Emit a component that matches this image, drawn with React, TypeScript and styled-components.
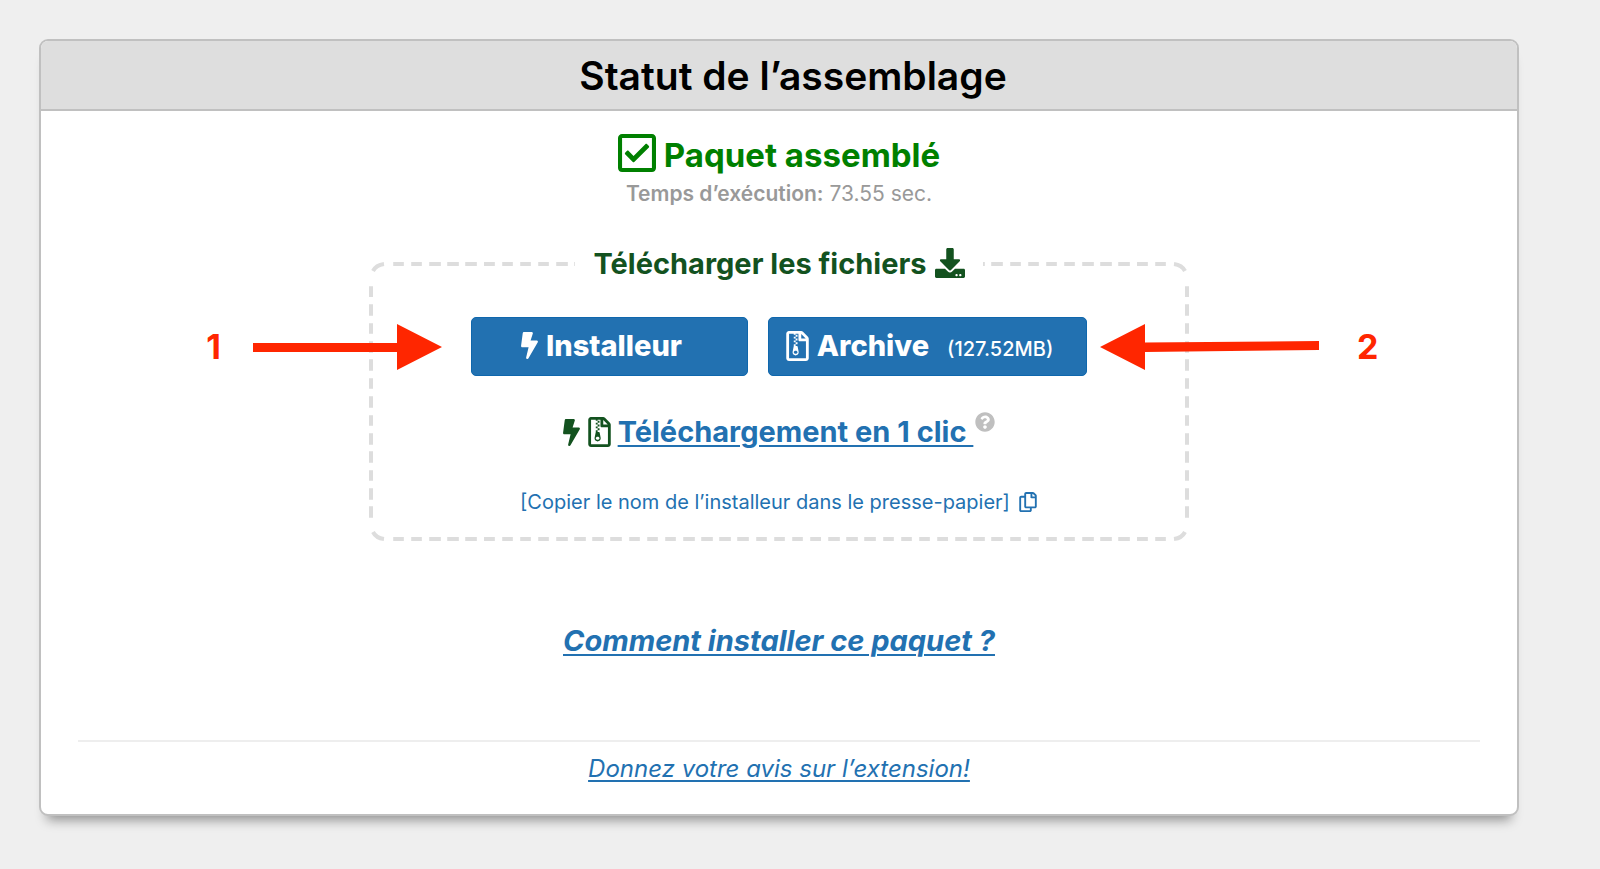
import React from "react";
import styled, { createGlobalStyle } from "styled-components";
import {
  FaBolt,
  FaDownload,
  FaQuestionCircle,
  FaRegCheckSquare,
  FaRegCopy,
  FaRegFileArchive,
} from "react-icons/fa";

const GlobalStyle = createGlobalStyle`
  * {
    box-sizing: border-box;
  }
  body {
    margin: 0;
    background: #efefef;
    color: #000;
    font-family: Inter, "Liberation Sans", sans-serif;
  }
`;

const Page = styled.main`
  padding: 39px 81px 52px 39px;
`;

const Card = styled.section`
  border: 2px solid #c0c0c0;
  border-radius: 9px;
  background: #fff;
  box-shadow: 0 12px 12px -8px rgba(0, 0, 0, 0.4);
`;

const CardHeader = styled.header`
  padding: 11px 0 9px 28px;
  border-bottom: 2px solid #c0c0c0;
  border-radius: 7px 7px 0 0;
  background: #dedede;
  text-align: center;
`;

const Title = styled.h1`
  margin: 0;
  font-size: 39px;
  font-weight: 600;
  line-height: 48px;
`;

const CardBody = styled.div`
  display: flex;
  flex-direction: column;
  align-items: center;
  padding: 20px 37px 30px;
`;

const Status = styled.h2`
  display: flex;
  align-items: center;
  gap: 8px;
  margin: 0;
  color: #008000;
  font-size: 33px;
  font-weight: 700;
  line-height: 48px;

  svg {
    width: 38px;
    height: 44px;
    margin-bottom: 4px;
  }
`;

const RunTime = styled.p`
  margin: 0 0 35px;
  color: #999;
  font-size: 21px;
  line-height: 30px;

  b {
    font-weight: 600;
  }
`;

/* Tile for the dashed frame: 20px rounded corners around an 18px dash period. */
const dashTile = `url("data:image/svg+xml,${encodeURIComponent(
  '<svg xmlns="http://www.w3.org/2000/svg" width="58" height="58" fill="none" stroke="#ddd" stroke-width="4">' +
    '<path d="M24 2h11M24 56h11M2 24v11M56 24v11"/>' +
    '<path d="M4 9Q7 3 15 2M54 9Q51 3 43 2M4 49Q7 55 15 56M54 49Q51 55 43 56"/>' +
    "</svg>",
)}")`;

const Downloads = styled.fieldset`
  display: flex;
  flex-direction: column;
  align-items: center;
  width: 820px;
  max-width: 100%;
  margin: 0;
  padding: 33px 20px 20px;
  border: 4px dashed #ddd;
  border-image: ${dashTile} 20 / 20px round;
`;

const Legend = styled.legend`
  margin: 0 auto;
  padding: 0 18px;
  color: #13521f;
  font-size: 29px;
  font-weight: 700;
  line-height: 40px;

  svg {
    margin-left: 8px;
    vertical-align: -4px;
  }
`;

const ButtonRow = styled.div`
  position: relative;
  display: flex;
  gap: 20px;
  margin-bottom: 36px;
`;

const BoltIcon = styled(FaBolt)`
  width: 17px;
  height: 27px;
`;

const ArchiveIcon = styled(FaRegFileArchive)`
  width: 23px;
  height: 30px;
`;

const DownloadButton = styled.button<{ $width: number }>`
  display: flex;
  align-items: center;
  justify-content: center;
  gap: 8px;
  width: ${({ $width }) => $width}px;
  height: 59px;
  padding: 0 16px 2px 0;
  border: 1px solid #0f67ad;
  border-radius: 5px;
  background: #2271b1;
  color: #fff;
  font-family: inherit;
  font-size: 29px;
  font-weight: 800;
  cursor: pointer;
`;

const FileSize = styled.span`
  margin-left: 10px;
  padding-top: 6px;
  font-size: 20px;
  font-weight: 500;
`;

const Callout = styled.div<{ $side: "left" | "right" }>`
  position: absolute;
  top: 0;
  ${({ $side }) => ($side === "left" ? "right: calc(100% + 29px);" : "left: calc(100% + 13px);")}
  display: flex;
  flex-direction: ${({ $side }) => ($side === "left" ? "row" : "row-reverse")};
  align-items: center;
  gap: ${({ $side }) => ($side === "left" ? 32 : 38)}px;
  height: 59px;
  color: #ff2600;
  font-size: 34px;
  font-weight: 700;
  pointer-events: none;

  svg {
    flex: none;
  }
`;

const OneClick = styled.div`
  display: flex;
  align-items: center;
  margin-bottom: 35px;
  color: #13521f;
  font-size: 29px;
  font-weight: 700;
  line-height: 40px;
`;

const OneClickIcons = styled.span`
  display: flex;
  align-items: center;
  gap: 8px;
  margin-right: 7px;
`;

const Link = styled.a`
  color: #2271b1;
  text-decoration-thickness: 2px;
  text-underline-offset: 3px;
  white-space: pre;
`;

const HelpButton = styled.button`
  display: flex;
  align-self: flex-start;
  margin: 0 0 0 2px;
  padding: 0;
  border: 0;
  background: none;
  color: #bfbfbf;
  cursor: help;
`;

const CopyButton = styled.button`
  display: flex;
  align-items: center;
  gap: 8px;
  padding: 0;
  border: 0;
  background: none;
  color: #2271b1;
  font-family: inherit;
  font-size: 20px;
  line-height: 30px;
  cursor: pointer;
`;

const HowTo = styled.p`
  margin: 80px 0 79px;
  font-size: 29px;
  font-style: italic;
  font-weight: 700;
  line-height: 40px;
`;

const Footer = styled.footer`
  align-self: stretch;
  padding-top: 12px;
  border-top: 2px solid #eee;
  font-size: 24px;
  font-style: italic;
  line-height: 30px;
  text-align: center;
`;

export default function App() {
  return (
    <>
      <GlobalStyle />
      <Page>
        <Card>
          <CardHeader>
            <Title>Statut de l’assemblage</Title>
          </CardHeader>
          <CardBody>
            <Status>
              <FaRegCheckSquare aria-hidden />
              Paquet assemblé
            </Status>
            <RunTime>
              <b>Temps d’exécution:</b> 73.55 sec.
            </RunTime>

            <Downloads>
              <Legend>
                Télécharger les fichiers
                <FaDownload size={30} aria-hidden />
              </Legend>
              <ButtonRow>
                <Callout $side="left">
                  <span>1</span>
                  <svg width="189" height="46" viewBox="0 0 189 46" fill="currentColor" aria-hidden>
                    <path d="M0 19H144V0L189 23L144 46V28H0Z" />
                  </svg>
                </Callout>
                <DownloadButton type="button" $width={277}>
                  <BoltIcon aria-hidden />
                  Installeur
                </DownloadButton>
                <DownloadButton type="button" $width={319}>
                  <ArchiveIcon aria-hidden />
                  Archive
                  <FileSize>(127.52MB)</FileSize>
                </DownloadButton>
                <Callout $side="right">
                  <span>2</span>
                  <svg width="219" height="46" viewBox="0 0 219 46" fill="currentColor" aria-hidden>
                    <path d="M0 23L45 0V18.5L219 17V26L45 28V46Z" />
                  </svg>
                </Callout>
              </ButtonRow>
              <OneClick>
                <OneClickIcons>
                  <BoltIcon aria-hidden />
                  <ArchiveIcon aria-hidden />
                </OneClickIcons>
                <Link href="#telechargement">{"Téléchargement en 1 clic "}</Link>
                <HelpButton type="button" aria-label="Aide">
                  <FaQuestionCircle size={20} aria-hidden />
                </HelpButton>
              </OneClick>
              <CopyButton type="button">
                [Copier le nom de l’installeur dans le presse-papier]
                <FaRegCopy size={20} aria-hidden />
              </CopyButton>
            </Downloads>

            <HowTo>
              <Link href="#installation">Comment installer ce paquet ?</Link>
            </HowTo>
            <Footer>
              <Link href="#avis">Donnez votre avis sur l’extension!</Link>
            </Footer>
          </CardBody>
        </Card>
      </Page>
    </>
  );
}
